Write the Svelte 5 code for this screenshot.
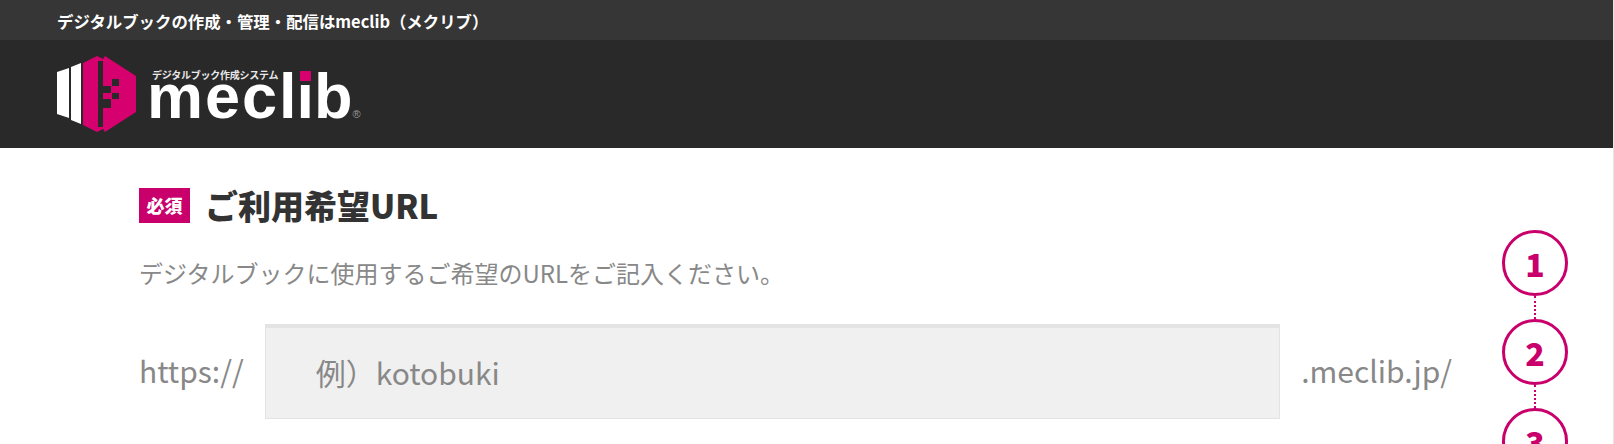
<script>
    const steps = [1, 2, 3];
</script>

<div class="page">
    <header class="header">
        <p class="header__lead">デジタルブックの作成・管理・配信はmeclib（メクリブ）</p>
        <div class="header__main">
            <a class="logo" href="#top" aria-label="meclib">
                <svg class="logo__mark" width="80" height="76" viewBox="0 0 80 76">
                    <polygon points="0,16 12,12 12,62 0,58" fill="#fff" />
                    <polygon points="14,11 24,7 24,68 14,64" fill="#fff" />
                    <polygon points="26,7 40,0 46,3 46,73 40,76 26,69" fill="#d6006e" />
                    <polygon points="48,0 79,20 79,56 48,76 46,73 46,3" fill="#d6006e" />
                    <rect x="41" y="5" width="5" height="66" fill="#292929" />
                    <rect x="55" y="23" width="7" height="7" fill="#292929" />
                    <rect x="46" y="30" width="8" height="7" fill="#292929" />
                    <rect x="55" y="37" width="7" height="6" fill="#292929" />
                    <rect x="46" y="43" width="8" height="9" fill="#292929" />
                </svg>
                <div class="logo__text">
                    <span class="logo__tag">デジタルブック作成システム</span>
                    <span class="logo__name"><span class="logo__mec">mec</span>lib<span class="logo__dot"></span><span class="logo__reg">®</span></span>
                </div>
            </a>
        </div>
    </header>

    <main class="main">
        <section class="form">
            <h2 class="form__title"><span class="badge">必須</span>ご利用希望URL</h2>
            <p class="form__desc">デジタルブックに使用するご希望のURLをご記入ください。</p>
            <div class="url">
                <span class="url__part">https://</span>
                <input class="url__input" type="text" placeholder="例）kotobuki" />
                <span class="url__part">.meclib.jp/</span>
            </div>
        </section>

        <ol class="steps">
            {#each steps as step}
                <li class="steps__item">{step}</li>
            {/each}
        </ol>
    </main>
</div>

<style>
    :global(body) {
        overflow: hidden;
        background: #fff;
    }

    .page {
        height: 444px;
        overflow: hidden;
        font-family: "Noto Sans CJK JP", "Noto Sans", sans-serif;
        border-right: 1px solid #e6e6e6;
    }

    .header {
        background: #292929;
    }

    .header__lead {
        margin: 0;
        height: 40px;
        padding-left: 57px;
        background: #363636;
        color: #fff;
        font-size: 16.4px;
        font-weight: 700;
        line-height: 43px;
    }

    .header__main {
        height: 108px;
        padding-left: 57px;
        display: flex;
        align-items: center;
    }

    .logo {
        display: flex;
        align-items: center;
        color: #fff;
        text-decoration: none;
    }

    .logo__mark {
        margin-right: 10px;
    }

    .logo__text {
        display: flex;
        flex-direction: column;
        margin-top: 1px;
    }

    .logo__tag {
        font-size: 10px;
        font-weight: 700;
        line-height: 12px;
        letter-spacing: -0.25px;
        margin: 0 0 -9px 5px;
        color: #e8e8e8;
        white-space: nowrap;
    }

    .logo__name {
        position: relative;
        font-family: "Liberation Sans", sans-serif;
        font-size: 63px;
        font-weight: 700;
        line-height: 48px;
    }

    .logo__mec {
        letter-spacing: 2px;
    }

    .logo__dot {
        position: absolute;
        left: 153px;
        top: -1px;
        width: 11px;
        height: 10px;
        background: #d6006e;
    }

    .logo__reg {
        font-size: 11px;
        font-weight: 400;
        line-height: 1;
        color: #999;
    }

    .main {
        display: flex;
        padding: 40px 45px 0 139px;
    }

    .form {
        flex: 1;
    }

    .form__title {
        margin: 0;
        display: flex;
        align-items: center;
        color: #333;
        font-size: 33px;
        font-weight: 900;
        line-height: 35px;
    }

    .badge {
        width: 51px;
        height: 35px;
        margin-right: 15px;
        background: #c9006b;
        color: #fff;
        font-size: 18px;
        font-weight: 900;
        line-height: 35px;
        text-align: center;
    }

    .form__desc {
        margin: 30px 0 0;
        color: #888;
        font-size: 24px;
        line-height: 40px;
    }

    .url {
        display: flex;
        align-items: center;
        gap: 21px;
        margin-top: 31px;
        color: #888;
        font-size: 30px;
    }

    .url__part {
        padding-bottom: 3px;
    }

    .url__input {
        flex: 1;
        min-width: 0;
        height: 95px;
        box-sizing: border-box;
        padding: 0 50px 3px;
        background: #f0f0f0;
        border: 1px solid #e3e3e3;
        border-top-width: 4px;
        border-radius: 0;
        outline: none;
        font: inherit;
    }

    .url__input::placeholder {
        color: #888;
        opacity: 1;
    }

    .steps {
        margin: 42px 0 0 50px;
        padding: 0;
        list-style: none;
        width: 66px;
        flex: none;
    }

    .steps__item {
        position: relative;
        width: 66px;
        height: 66px;
        box-sizing: border-box;
        margin-bottom: 23px;
        border: 3px solid #c9006b;
        border-radius: 50%;
        color: #c9006b;
        font-size: 32px;
        font-weight: 900;
        line-height: 60px;
        text-align: center;
    }

    .steps__item:not(:last-child)::after {
        content: "";
        position: absolute;
        left: 50%;
        top: 63px;
        height: 23px;
        margin-left: -1px;
        border-left: 2px dotted #c9006b;
    }
</style>
